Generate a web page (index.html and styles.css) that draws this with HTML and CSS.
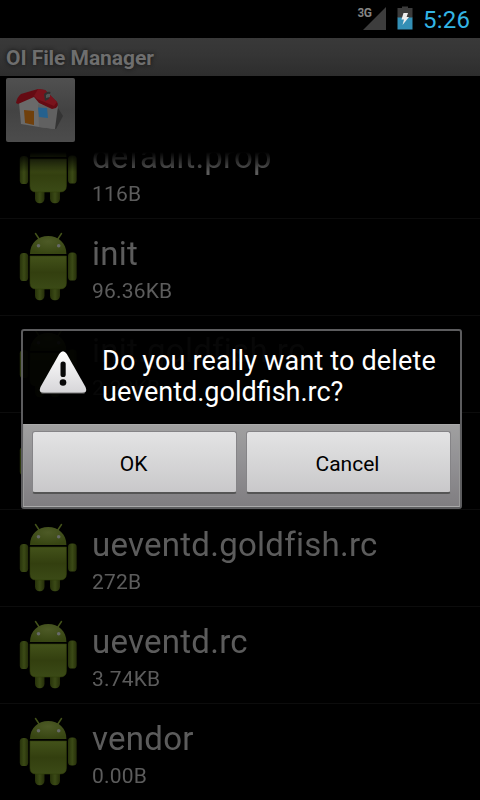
FILE: index.html
```
<!DOCTYPE html>
<html lang="en">
<head>
<meta charset="utf-8">
<title>OI File Manager</title>
<link rel="stylesheet" href="styles.css">
</head>
<body>
<svg class="defs" width="0" height="0" aria-hidden="true">
  <defs>
    <linearGradient id="green" x1="0" y1="0" x2="0" y2="1"><stop offset="0" stop-color="#43521a"/><stop offset=".5" stop-color="#333f0f"/><stop offset="1" stop-color="#3b4a16"/></linearGradient>
    <linearGradient id="limb" x1="0" y1="0" x2="1" y2="0"><stop offset="0" stop-color="#27320a"/><stop offset=".5" stop-color="#3b4a16"/><stop offset="1" stop-color="#252e09"/></linearGradient>
    <radialGradient id="head" cx=".5" cy=".3" r=".7"><stop offset="0" stop-color="#4d5a26"/><stop offset="1" stop-color="#374512"/></radialGradient>
    <symbol id="robot" viewBox="0 0 60 70">
      <path d="M17.5 1.5l4 6M43.500 1.500l-4 6" stroke="#43521a" stroke-width="1.500" stroke-linecap="round"/>
      <path d="M12 22C12 11 20 4 30.200 4S48.400 11 48.400 22Z" fill="url(#head)"/>
      <circle cx="20.500" cy="13.800" r="1.800" fill="#666967"/><circle cx="40.700" cy="13.800" r="1.800" fill="#666967"/>
      <rect x="17" y="52" width="9.500" height="16.300" rx="4.500" fill="url(#limb)"/>
      <rect x="32" y="52" width="10" height="16.300" rx="4.500" fill="url(#limb)"/>
      <path d="M12 24H48.400V51Q48.400 57 42 57H18Q12 57 12 51Z" fill="url(#green)" stroke="#303d0b" stroke-width=".6"/>
      <rect x="1.800" y="21" width="8.400" height="28" rx="3.600" fill="url(#limb)"/>
      <rect x="50" y="20.500" width="8.700" height="28" rx="3.600" fill="url(#limb)"/>
    </symbol>
  </defs>
</svg>
<div class="screen">
  <header class="status">
    <svg class="signal" width="30" height="28" viewBox="0 0 30 28"><path d="M29 3V26H6Z" fill="#3d3d3d"/><text class="network" x="0.500" y="13" textLength="14.500">3G</text></svg>
    <svg class="battery" width="16" height="24" viewBox="0 0 16 24"><path d="M5 .5H11V2H15.500V12H.5V2H5Z" fill="#3c3c3c"/><path d="M.5 11.500H15.500V23.500H.5Z" fill="#338fb5"/><path d="M6.500 7H11L9.600 11H12L5.500 19L7 13.500H4.500Z" fill="#eee"/></svg>
    <span class="clock">5:26</span>
  </header>
  <h1 class="title">OI File Manager</h1>
  <nav class="path">
    <div class="home">
      <svg width="69" height="64" viewBox="0 0 69 64">
        <path d="M52 30L57 38L50 51L43 49Z" fill="#343434"/>
        <path d="M13 25L29 16L46 29L49 51L33 49L15 46Z" fill="#6a6a6a"/>
        <path d="M32 26L47 30L52 28L49 51L33 49Z" fill="#616161"/>
        <path d="M10 25Q11 19 15 16L32 11L39 12L51 24Q53 27 50 30L46 31L33 25L28 19L12 26Z" fill="#650b13"/>
        <path d="M32 11L39 12L51 24L48 28L31 21L28 18Z" fill="#79131c"/>
        <path d="M38 16Q41 13 44.500 14L43 21L39 23Z" fill="#303030"/><path d="M40 17Q42 15 44 16V19L40 20Z" fill="#555"/>
        <path d="M18 32L28 33V47L19 45Z" fill="#70400c"/>
        <path d="M32 29.500L41 30L42 40L33 39Z" fill="#25618e"/>
      </svg>
    </div>
  </nav>
  <main class="list">
    <div class="row first"><svg class="icon"><use href="#robot"/></svg><div class="text"><div class="name">default.prop</div><div class="size">116B</div></div></div>
    <div class="row"><svg class="icon"><use href="#robot"/></svg><div class="text"><div class="name">init</div><div class="size">96.36KB</div></div></div>
    <div class="row"><svg class="icon"><use href="#robot"/></svg><div class="text"><div class="name">init.goldfish.rc</div><div class="size">2.29KB</div></div></div>
    <div class="row"><svg class="icon"><use href="#robot"/></svg></div>
    <div class="row"><svg class="icon"><use href="#robot"/></svg><div class="text"><div class="name">ueventd.goldfish.rc</div><div class="size">272B</div></div></div>
    <div class="row"><svg class="icon"><use href="#robot"/></svg><div class="text"><div class="name">ueventd.rc</div><div class="size">3.74KB</div></div></div>
    <div class="row"><svg class="icon"><use href="#robot"/></svg><div class="text"><div class="name">vendor</div><div class="size">0.00B</div></div></div>
  </main>
  <section class="dialog" role="alertdialog">
    <div class="message">
      <svg class="warning" width="50" height="46" viewBox="0 0 50 46">
        <defs><linearGradient id="tri" x1="0" y1="0" x2="0" y2="1"><stop offset="0" stop-color="#fff"/><stop offset="1" stop-color="#d6d5d8"/></linearGradient></defs>
        <path d="M21.200 4Q25 -1.500 28.800 4L47.500 37Q50 43 44 43H6Q0 43 2.500 37Z" fill="url(#tri)"/>
        <path d="M3.500 43H46.500" stroke="#777" stroke-width="1"/>
        <rect x="22.500" y="11.500" width="5.200" height="15.500" rx="2.600" fill="#080808"/><circle cx="25" cy="32.500" r="3.300" fill="#080808"/>
      </svg>
      <p class="question">Do you really want to delete<br><span class="file">ueventd.goldfish.rc?</span></p>
    </div>
    <div class="buttons"><button class="button">OK</button><button class="button">Cancel</button></div>
  </section>
</div>
</body>
</html>
```
FILE: styles.css
```
* { box-sizing: border-box; }
body { margin: 0; background: #000; font-family: Roboto, sans-serif; }
.defs { position: absolute; }
.screen { position: relative; width: 480px; height: 800px; overflow: hidden; background: #000; display: flex; flex-direction: column; }
.status { height: 38px; flex: none; display: flex; align-items: flex-start; padding: 4px 0 0 357px; }
.signal { flex: none; }
.network { font: bold 12px Roboto, sans-serif; fill: #858585; stroke: #000; stroke-width: 2px; paint-order: stroke; }
.battery { flex: none; margin: 2px 0 0 10px; }
.clock { margin: 1px 0 0 10px; font-size: 24px; line-height: 30px; letter-spacing: .2px; color: #33b5e5; }
.title { height: 38px; flex: none; margin: 0; padding-left: 6px; font-size: 21px; line-height: 41px; letter-spacing: -.06px; font-weight: bold; color: #6e6e6e; text-shadow: 0 0 4px #111; background: linear-gradient(#393939, #353535 45%, #2d2d2d); }
.path { height: 76px; flex: none; padding: 2px 6px; }
.home { width: 69px; height: 64px; border-radius: 2px; background: linear-gradient(#505050, #434343 50%, #4c4c4c); }
.home svg { display: block; }
.list { height: 648px; overflow: hidden; -webkit-mask-image: linear-gradient(transparent, #000 20px); mask-image: linear-gradient(transparent, #000 20px); }
.row { height: 97px; display: flex; padding: 13px 0 0 18px; border-bottom: 1px solid #0c0c0c; }
.first { margin-top: -30px; }
.first .name { letter-spacing: .13px; }
.icon { width: 60px; height: 70px; flex: none; }
.text { margin-left: 14px; color: #5c5c5c; white-space: nowrap; }
.name { font-size: 33px; line-height: 39px; margin-top: 2px; letter-spacing: .26px; }
.size { font-size: 21px; line-height: 25px; margin-top: 6px; letter-spacing: .18px; }
.dialog { position: absolute; left: 21px; top: 329px; width: 441px; height: 180px; border: 2px solid #5c5c5e; border-radius: 3px; background: rgba(0,0,0,.92); }
.message { height: 93px; display: flex; padding: 14px 0 0 15px; }
.warning { flex: none; margin-top: 5px; }
.question { margin: 1px 0 0 14px; color: #fff; font-size: 27px; line-height: 31px; letter-spacing: .16px; white-space: nowrap; }
.file { letter-spacing: 0; }
.buttons { height: 83px; display: flex; gap: 9px; padding: 6px 8px 14px; border: 1px solid #aaa; border-left-color: #999; border-right-color: #999; background: linear-gradient(#a0a0a0, #929194 45%, #807e81); }
.button { flex: 1; height: 63px; border: 1px solid #858487; border-bottom: 2px solid #555; border-radius: 3px; background: linear-gradient(#e3e3e4, #d6d6d7 50%, #c9c8ca); color: #000; font: 21px/24px Roboto, sans-serif; padding: 3px 2px 0 0; }
```
